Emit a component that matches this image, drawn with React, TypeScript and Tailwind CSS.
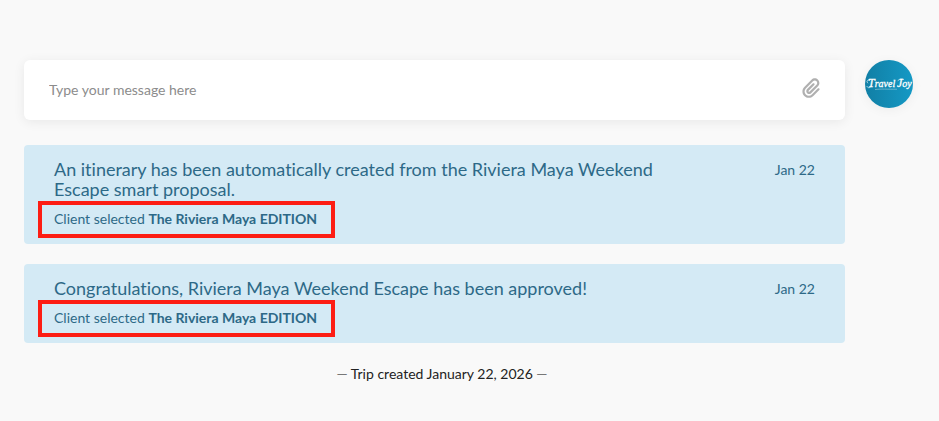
import type React from 'react';
import { FaPaperclip } from 'react-icons/fa6';

interface Activity {
  id: string;
  title: string;
  selection: string;
  date: string;
}

const activities: Activity[] = [
  {
    id: 'itinerary-created',
    title:
      'An itinerary has been automatically created from the Riviera Maya Weekend Escape smart proposal.',
    selection: 'The Riviera Maya EDITION',
    date: 'Jan 22',
  },
  {
    id: 'proposal-approved',
    title: 'Congratulations, Riviera Maya Weekend Escape has been approved!',
    selection: 'The Riviera Maya EDITION',
    date: 'Jan 22',
  },
];

const MessageBox: React.FC = () => (
  <form
    className="flex h-15 items-center rounded-md bg-white pr-6 pl-[25px] shadow-[0_2px_12px_rgba(0,0,0,0.07)]"
    onSubmit={(e) => e.preventDefault()}
  >
    <input
      type="text"
      aria-label="Message"
      placeholder="Type your message here"
      className="min-w-0 flex-1 bg-transparent text-sm text-[#333] outline-none placeholder:text-[#8c8c8c]"
    />
    <button type="button" aria-label="Attach a file" className="pb-1 text-[#b0b0b0]">
      <FaPaperclip size={20} />
    </button>
  </form>
);

const Avatar: React.FC = () => (
  <div className="size-12 shrink-0 overflow-hidden rounded-full bg-linear-to-r from-[#117fa5] to-[#1599c5] shadow-[0_2px_12px_rgba(0,0,0,0.05)]">
    <svg viewBox="0 0 48 48" className="size-full" role="img" aria-label="Travel Joy">
      <g
        fill="#fff"
        fontFamily="'Liberation Serif', serif"
        fontStyle="italic"
        fontSize="10"
        stroke="#fff"
        strokeWidth="0.3"
      >
        <text x="3" y="27">
          <tspan fontSize="12">T</tspan>ravel
        </text>
        <text x="32" y="27">
          <tspan fontSize="12">J</tspan>oy
        </text>
      </g>
      {/* flourishes on the T and under the word */}
      <path
        d="M5 19.4C2 19.6 1 22 2.8 23M2 26.4C2.6 28.4 5 28 5.8 26.8M33 20.4C34.6 18.8 37 19 38.6 19.4"
        fill="none"
        stroke="#fff"
        strokeOpacity="0.8"
        strokeWidth="0.8"
        strokeLinecap="round"
      />
      <path
        d="M10 29.6C16 28.6 22 29.4 32 29.2"
        fill="none"
        stroke="#fff"
        strokeOpacity="0.5"
        strokeWidth="0.7"
      />
    </svg>
  </div>
);

const ActivityCard: React.FC<{ activity: Activity }> = ({ activity }) => (
  <li className="flex rounded bg-[#d4eaf5] px-[30px] pt-[14px] pb-[15px] text-[#2d6987]">
    <div className="w-5/6">
      <h2 className="text-lg leading-5">{activity.title}</h2>
      <p className="relative mt-[10px] w-fit text-sm leading-5">
        Client selected <strong className="font-bold">{activity.selection}</strong>
        <span className="pointer-events-none absolute -top-2 -right-[18px] -bottom-[9px] -left-4 border-4 border-[#fd1d14]" />
      </p>
    </div>
    <time className="w-1/6 pt-px text-right text-sm leading-5">{activity.date}</time>
  </li>
);

export default function App() {
  return (
    <div className="min-h-screen bg-[#f9f9f9] pt-15 pr-[26px] pb-9 pl-6 font-['Lato',sans-serif] [font-variant-ligatures:none]">
      <div className="flex items-start gap-5">
        <main className="min-w-0 flex-1">
          <MessageBox />
          <ul className="mt-[25px] flex flex-col gap-5">
            {activities.map((activity) => (
              <ActivityCard key={activity.id} activity={activity} />
            ))}
          </ul>
          <p className="mt-[21px] pl-[15px] text-center text-sm leading-5 text-[#222]">
            <span className="text-[#777]">—</span> Trip created January 22, 2026{' '}
            <span className="text-[#777]">—</span>
          </p>
        </main>
        <Avatar />
      </div>
    </div>
  );
}
